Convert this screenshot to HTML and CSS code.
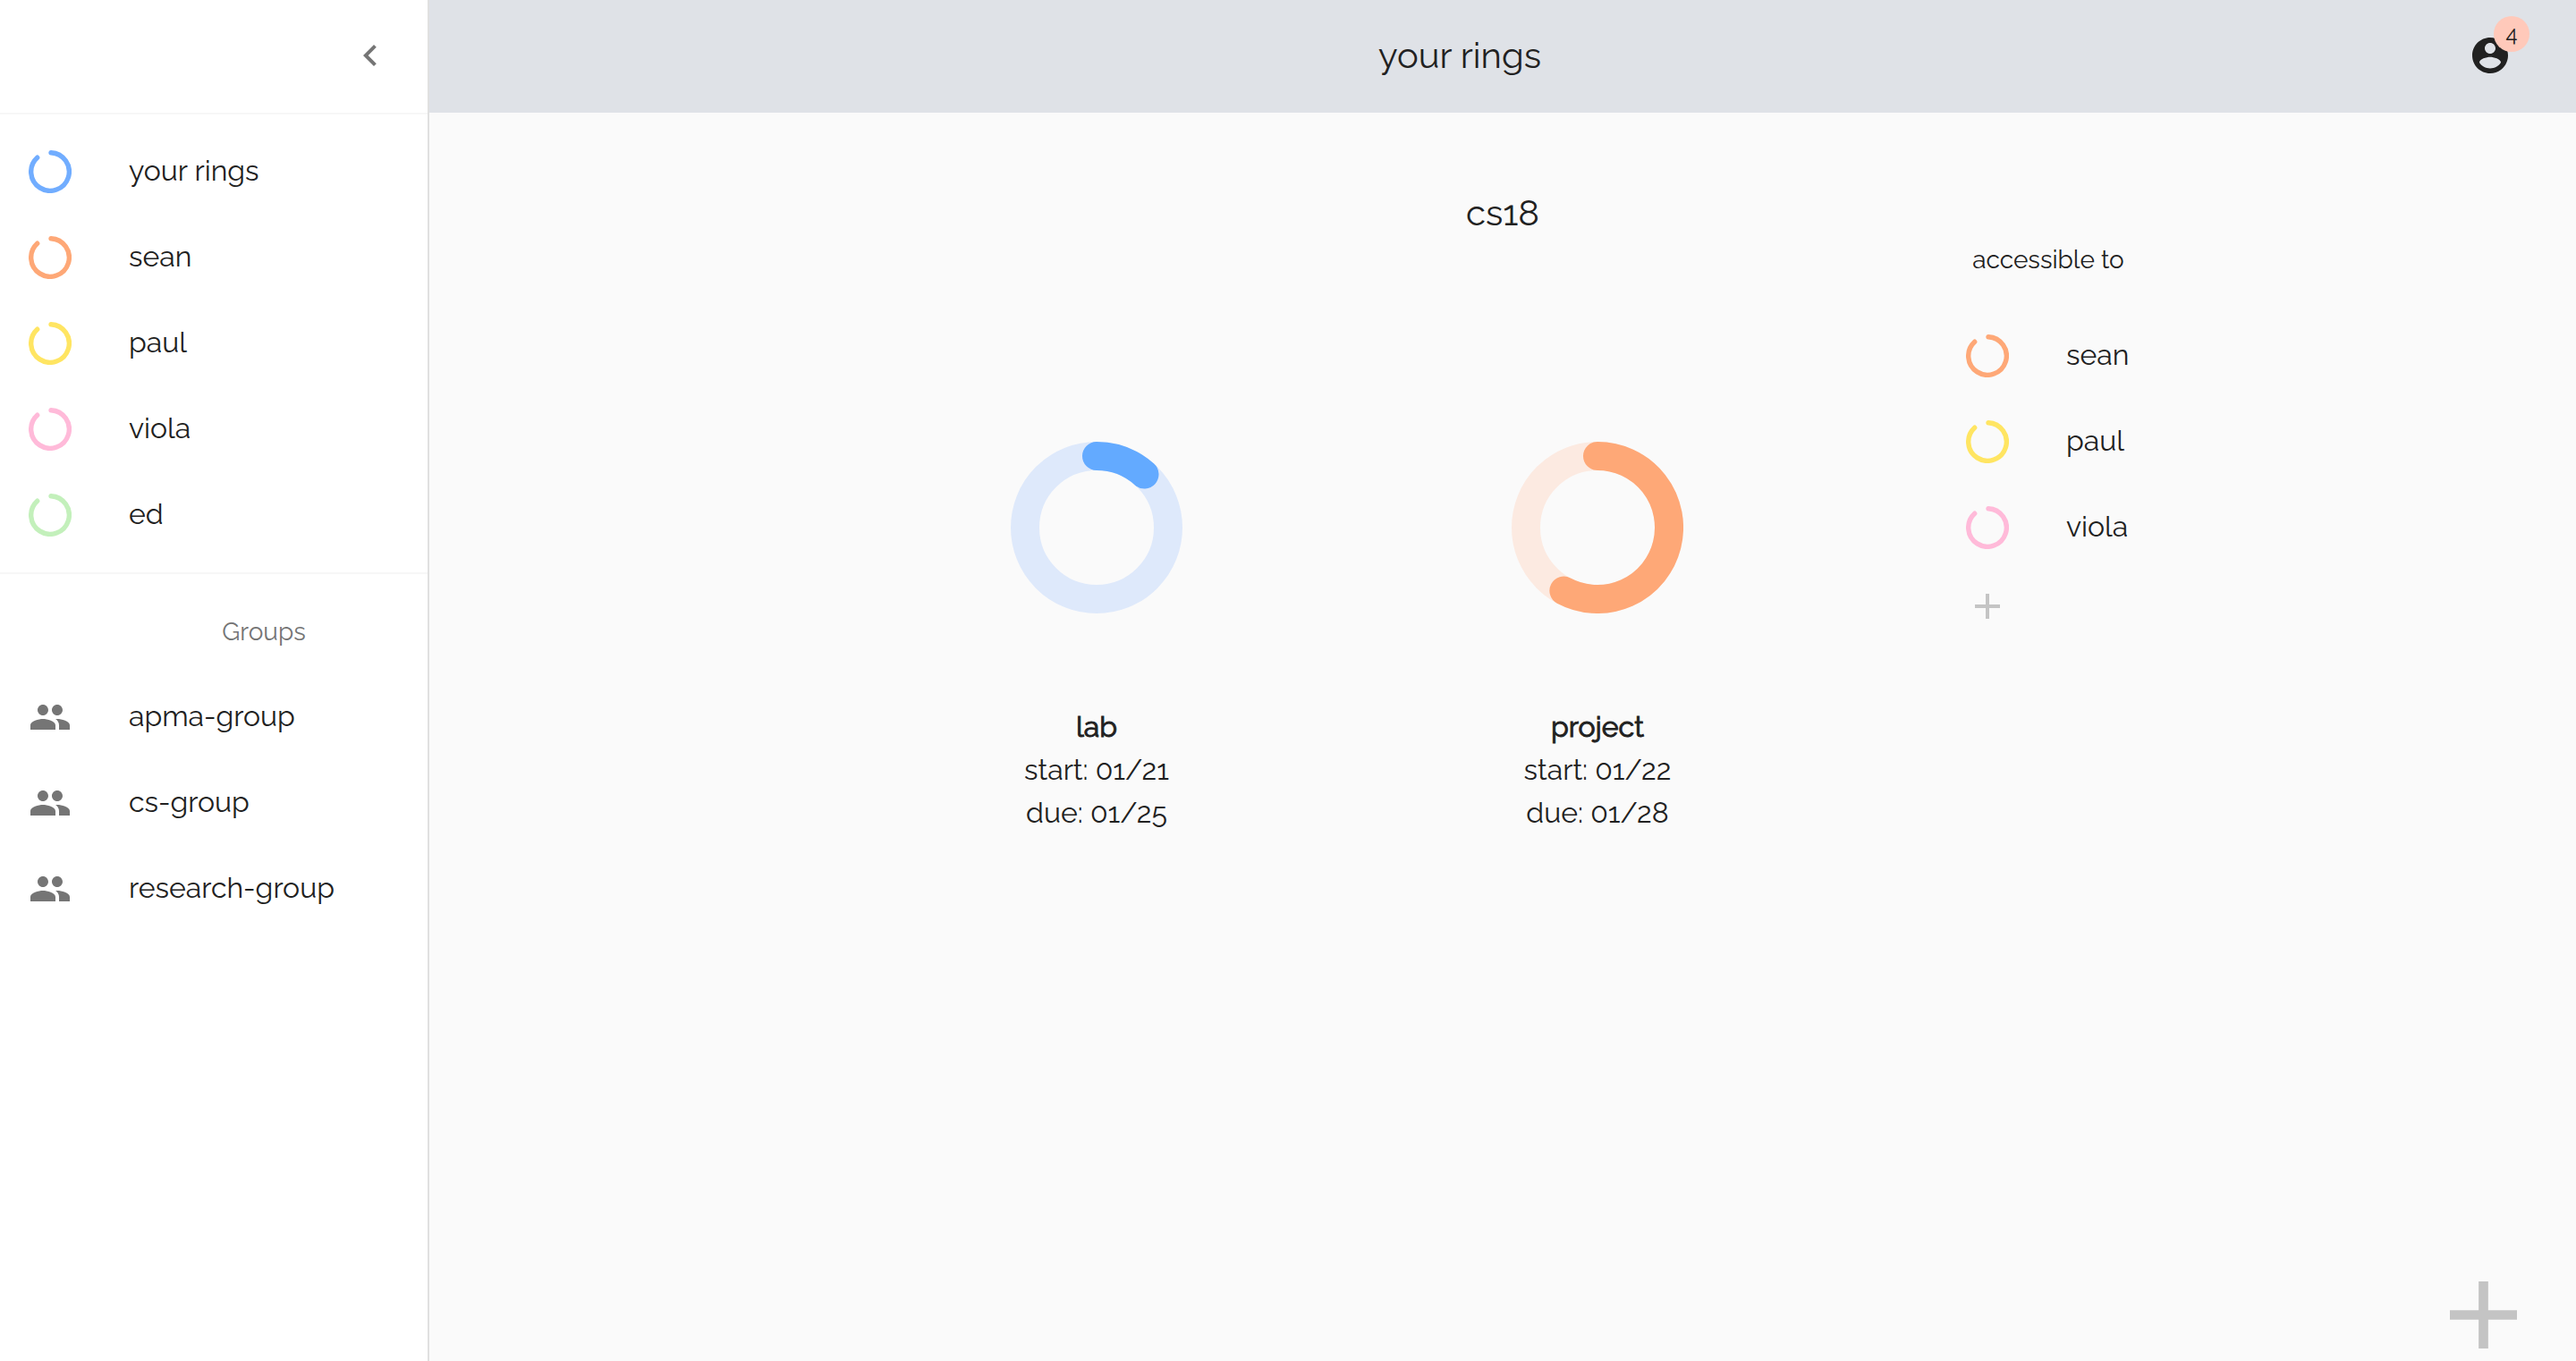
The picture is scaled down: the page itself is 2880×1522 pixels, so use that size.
FILE: index.html
```html
<!DOCTYPE html>
<html lang="en">
<head>
<meta charset="utf-8">
<title>your rings</title>
<link rel="stylesheet" href="styles.css">
</head>
<body>
<svg class="defs" aria-hidden="true">
  <symbol id="ring" viewBox="0 0 48 48"><path d="M25 2.7A21.3 21.3 0 1 1 9.7 8.2" fill="none" stroke="currentColor" stroke-width="5.4" stroke-linecap="round"/></symbol>
  <symbol id="people" viewBox="0 0 24 24"><path fill="currentColor" d="M16 11c1.66 0 2.99-1.34 2.99-3S17.66 5 16 5s-3 1.34-3 3 1.34 3 3 3zm-8 0c1.66 0 2.99-1.34 2.99-3S9.66 5 8 5 5 6.34 5 8s1.34 3 3 3zm0 2c-2.33 0-7 1.17-7 3.5V19h14v-2.500c0-2.330-4.670-3.500-7-3.500zm8 0c-.29 0-.62.02-.97.05 1.160.84 1.970 1.970 1.970 3.450V19h6v-2.500c0-2.330-4.670-3.500-7-3.500z"/></symbol>
  <symbol id="plus" viewBox="5 5 14 14"><path fill="currentColor" d="M19 13h-6v6h-2v-6H5v-2h6V5h2v6h6z"/></symbol>
</svg>
<div class="app">
  <aside class="sidebar">
    <div class="sidebar-top">
      <button class="icon-button" aria-label="Collapse menu"><svg class="icon" viewBox="0 0 24 24"><path fill="currentColor" d="M15.410 7.410 14 6l-6 6 6 6 1.410-1.410L10.830 12z"/></svg></button>
    </div>
    <nav class="list">
      <a class="row" href="#"><svg class="icon blue"><use href="#ring"/></svg><span class="label">your rings</span></a>
      <a class="row" href="#"><svg class="icon orange"><use href="#ring"/></svg><span class="label">sean</span></a>
      <a class="row" href="#"><svg class="icon yellow"><use href="#ring"/></svg><span class="label">paul</span></a>
      <a class="row" href="#"><svg class="icon pink"><use href="#ring"/></svg><span class="label">viola</span></a>
      <a class="row" href="#"><svg class="icon green"><use href="#ring"/></svg><span class="label">ed</span></a>
    </nav>
    <nav class="list" aria-labelledby="groups">
      <h2 class="subheader" id="groups">Groups</h2>
      <a class="row" href="#"><svg class="icon grey"><use href="#people"/></svg><span class="label">apma-group</span></a>
      <a class="row" href="#"><svg class="icon grey"><use href="#people"/></svg><span class="label">cs-group</span></a>
      <a class="row" href="#"><svg class="icon grey"><use href="#people"/></svg><span class="label">research-group</span></a>
    </nav>
  </aside>
  <div class="page">
    <header class="topbar">
      <h1 class="title">your rings</h1>
      <button class="icon-button account" aria-label="Account, 4 notifications"><svg class="icon" viewBox="0 0 24 24"><path fill="currentColor" fill-rule="evenodd" d="M12 2C6.480 2 2 6.480 2 12s4.480 10 10 10 10-4.480 10-10S17.520 2 12 2zm0 3c1.660 0 3 1.340 3 3s-1.340 3-3 3-3-1.340-3-3 1.340-3 3-3zm0 14.200c-2.500 0-4.710-1.280-6-3.220.03-1.990 4-3.080 6-3.080 1.990 0 5.970 1.090 6 3.080-1.290 1.940-3.500 3.220-6 3.220z"/></svg><span class="badge">4</span></button>
    </header>
    <main class="content">
      <h2 class="title">cs18</h2>
      <div class="board">
        <section class="tasks">
          <article class="task">
            <svg class="chart" viewBox="0 0 192 192" role="img" aria-label="lab progress"><circle cx="96" cy="96" r="80" fill="none" stroke="#dee9fb" stroke-width="32"/><path d="M96 16A80 80 0 0 1 149.500 36.500" fill="none" stroke="#63aaff" stroke-width="32" stroke-linecap="round"/></svg>
            <h3 class="name">lab</h3>
            <p>start: 01/21</p>
            <p>due: 01/25</p>
          </article>
          <article class="task">
            <svg class="chart" viewBox="0 0 192 192" role="img" aria-label="project progress"><circle cx="96" cy="96" r="80" fill="none" stroke="#fceae1" stroke-width="32"/><path d="M96 16A80 80 0 1 1 58.400 166.600" fill="none" stroke="#fea877" stroke-width="32" stroke-linecap="round"/></svg>
            <h3 class="name">project</h3>
            <p>start: 01/22</p>
            <p>due: 01/28</p>
          </article>
        </section>
        <section class="access">
          <h3 class="access-title">accessible to</h3>
          <a class="row" href="#"><svg class="icon orange"><use href="#ring"/></svg><span class="label">sean</span></a>
          <a class="row" href="#"><svg class="icon yellow"><use href="#ring"/></svg><span class="label">paul</span></a>
          <a class="row" href="#"><svg class="icon pink"><use href="#ring"/></svg><span class="label">viola</span></a>
          <button class="add" aria-label="Add person"><svg class="plus-small"><use href="#plus"/></svg></button>
        </section>
      </div>
    </main>
  </div>
</div>
<button class="fab" aria-label="Add ring"><svg class="plus-large"><use href="#plus"/></svg></button>
</body>
</html>
```

FILE: styles.css
```css
* { box-sizing: border-box; }
body {
  margin: 0;
  background: #fafafa;
  color: #212121;
  font: 400 32px/48px Raleway, Lato, sans-serif;
}
h1, h2, h3, p { margin: 0; font-size: 32px; font-weight: 400; }
button { border: 0; padding: 0; background: none; color: inherit; font: inherit; cursor: pointer; }
svg { display: block; }
.defs { position: absolute; width: 0; height: 0; }

.app { display: flex; min-height: 100vh; }
.sidebar {
  flex: 0 0 480px;
  background: #fff;
  border-right: 2px solid #e0e0e0;
}
.sidebar-top {
  display: flex;
  align-items: center;
  justify-content: flex-end;
  height: 126px;
  padding: 0 16px 2px;
  color: #757575;
}
.list { padding: 16px 0; border-top: 2px solid #f7f7f7; }
.row {
  display: flex;
  align-items: center;
  gap: 64px;
  height: 96px;
  padding: 0 32px;
  color: inherit;
  text-decoration: none;
}
.label { padding-bottom: 2px; }
.subheader {
  padding: 2px 0 0 112px;
  color: #757575;
  font-size: 28px;
  line-height: 94px;
  text-align: center;
}
.icon { flex: none; width: 48px; height: 48px; }
.icon-button { display: grid; place-items: center; width: 96px; height: 96px; }

.blue { color: #71adff; }
.orange { color: #fea877; }
.yellow { color: #ffe562; }
.pink { color: #ffbad9; }
.green { color: #c3f0bb; }
.grey { color: #757575; }

.page { flex: 1; min-width: 0; }
.topbar {
  display: flex;
  align-items: center;
  height: 126px;
  padding: 0 48px 2px;
  background: #dfe2e7;
}
.title { font-size: 40px; line-height: 64px; text-align: center; }
.topbar .title { flex: 1; }
.account { position: relative; }
.badge {
  position: absolute;
  top: 4px;
  right: 4px;
  width: 40px;
  height: 40px;
  border-radius: 50%;
  background: #ffc9ba;
  font-size: 24px;
  line-height: 40px;
  text-align: center;
}

.content { padding: 80px 48px; }
.board { display: flex; justify-content: center; gap: 100px; }
.tasks { display: flex; padding-top: 224px; }
.task { width: 560px; text-align: center; }
.chart { width: 192px; height: 192px; margin: 0 auto 103px; }
.name { -webkit-text-stroke: 1px currentColor; }
.access { width: 248px; }
.access-title { padding-bottom: 38px; font-size: 28px; line-height: 42px; text-align: center; }
.add { margin: 26px 42px; color: #c4c4c4; }
.plus-small { width: 28px; height: 28px; }
.fab { position: fixed; right: 66px; bottom: 14px; color: #c4c4c4; }
.plus-large { width: 75px; height: 75px; }
```
